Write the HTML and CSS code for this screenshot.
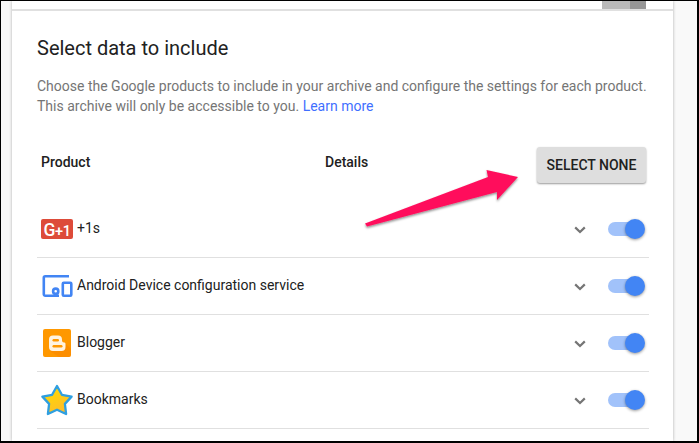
FILE: index.html
```html
<!DOCTYPE html>
<html lang="en">
<head>
<meta charset="utf-8">
<title>Select data to include</title>
<link rel="stylesheet" href="styles.css">
</head>
<body>
<div class="frame">
  <main class="card">
    <div class="topbar"><div class="block"><span class="block-light"></span><span class="block-dark"></span></div></div>
    <section class="content">
      <h1 class="title">Select data to include</h1>
      <p class="desc">Choose the Google products to include in your archive and configure the settings for each product.<br>This archive will only be accessible to you. <a class="link" href="#">Learn more</a></p>
      <div class="head">
        <span class="head-product">Product</span>
        <span class="head-details">Details</span>
        <button class="select-none">SELECT NONE</button>
      </div>
      <div class="row">
        <svg class="icon" viewBox="0 0 32 32"><rect x="0" y="6" width="32" height="20" rx="2" fill="#dd4b39"/><text x="2.500" y="22.500" class="gplus"><tspan class="gplus-g">G</tspan>+1</text></svg>
        <span class="name">+1s</span>
        <svg class="chev" viewBox="0 0 12 8"><path d="M1.2 1.4 6 6l4.8-4.6" fill="none" stroke="#757575" stroke-width="2.200"/></svg>
        <span class="toggle"><span class="track"></span><span class="thumb"></span></span>
      </div>
      <div class="row">
        <svg class="icon" viewBox="0 0 32 32"><g fill="none" stroke="#4285f4" stroke-width="2.600"><path d="M28 6.300H4.300A1.500 1.500 0 0 0 2.800 7.800V24.200A1.500 1.500 0 0 0 4.300 25.700H18"/><rect x="21.800" y="12.800" width="8.500" height="12.900" rx="1"/><circle cx="14.700" cy="21.200" r="2.600"/></g></svg>
        <span class="name">Android Device configuration service</span>
        <svg class="chev" viewBox="0 0 12 8"><path d="M1.2 1.4 6 6l4.800-4.600" fill="none" stroke="#757575" stroke-width="2.200"/></svg>
        <span class="toggle"><span class="track"></span><span class="thumb"></span></span>
      </div>
      <div class="row">
        <svg class="icon" viewBox="0 0 32 32"><rect x="2" y="2" width="28" height="28" rx="2" fill="#ff9800"/><path d="M24 16 30 22v6a2 2 0 0 1-2 2H18l-9-6Z" fill="#f57c00" opacity=".35"/><path d="M12 8.500h5a4 4 0 0 1 4 4v1a2 2 0 0 0 2 2h.5a1.500 1.500 0 0 1 1 1.500v3a4 4 0 0 1-4 4H12a4 4 0 0 1-4-4v-7.500a4 4 0 0 1 4-4Z" fill="#fff3e0"/><rect x="11.500" y="12" width="6.500" height="2.400" rx="1.200" fill="#ff9800"/><rect x="11.500" y="18" width="10" height="2.400" rx="1.200" fill="#ff9800"/></svg>
        <span class="name">Blogger</span>
        <svg class="chev" viewBox="0 0 12 8"><path d="M1.2 1.4 6 6l4.800-4.600" fill="none" stroke="#757575" stroke-width="2.200"/></svg>
        <span class="toggle"><span class="track"></span><span class="thumb"></span></span>
      </div>
      <div class="row">
        <svg class="icon" viewBox="0 0 32 32"><defs><linearGradient id="star" x1="0.2" y1="0" x2="0.8" y2="1"><stop offset="0" stop-color="#ffdc00"/><stop offset="1" stop-color="#ffb92e"/></linearGradient></defs><path d="M16 2 20.900 10.800 30.600 12.600 23.900 19.900 25.100 30 16 25.700 6.900 30 8.100 19.900 1.400 12.600 11.100 10.800Z" fill="url(#star)" stroke="#2f9fe0" stroke-width="2.300" stroke-linejoin="round"/></svg>
        <span class="name">Bookmarks</span>
        <svg class="chev" viewBox="0 0 12 8"><path d="M1.2 1.4 6 6l4.800-4.600" fill="none" stroke="#757575" stroke-width="2.200"/></svg>
        <span class="toggle"><span class="track"></span><span class="thumb"></span></span>
      </div>
    </section>
  </main>
  <svg class="arrow" viewBox="0 0 170 75"><defs><filter id="sh" x="-10%" y="-20%" width="120%" height="150%"><feDropShadow dx="0" dy="1.500" stdDeviation="1.200" flood-color="#000" flood-opacity="0.45"/></filter></defs><path d="M5 63.500 128 17 126.500 10 158 17 137 40 137 32 7 66.500Z" fill="#ff0f5b" filter="url(#sh)"/></svg>
</div>
</body>
</html>
```
FILE: styles.css
```css
* { box-sizing: border-box; }
html, body { margin: 0; padding: 0; }
body { width: 699px; height: 443px; overflow: hidden; font-family: Roboto, "Liberation Sans", sans-serif; }
.frame {
  position: relative;
  width: 699px;
  height: 443px;
  background: #f9f9f9;
  border-style: solid;
  border-color: #000;
  border-width: 1px 2px 2px 1px;
  padding: 0 24px 0 11px;
  overflow: hidden;
}
.card {
  height: 100%;
  background: #fff;
  box-shadow: 0 0 3px rgba(0,0,0,.3);
  overflow: hidden;
}
.topbar {
  height: 10px;
  border-bottom: 2px solid #e0e0e0;
  display: flex;
  justify-content: flex-end;
  padding-right: 27px;
}
.block { display: flex; height: 8px; }
.block-light { width: 28px; background: #b9b9b9; }
.block-dark { width: 16px; background: #969696; }
.content { padding: 0 24px 0 25px; }
.title {
  margin: 25px 0 0;
  font-size: 20px;
  line-height: 24px;
  font-weight: 400;
  color: #212121;
}
.desc {
  margin: 16px 0 0;
  font-size: 14px;
  line-height: 20px;
  color: #757575;
  white-space: nowrap;
}
.link { color: #3f6fff; text-decoration: none; }
.head {
  display: flex;
  align-items: center;
  height: 36px;
  margin-top: 31px;
  padding-left: 4px;
  font-size: 14px;
  font-weight: 500;
  color: #212121;
}
.head-product { width: 284px; margin-top: -6px; }
.head-details { flex: 1; margin-top: -6px; }
.select-none {
  width: 109px;
  height: 36px;
  margin-right: 3px;
  border: 0;
  border-radius: 3px;
  background: #dedede;
  box-shadow: 0 1px 2px rgba(0,0,0,.4);
  font: 500 14px Roboto, sans-serif;
  color: #212121;
}
.row {
  display: flex;
  align-items: center;
  height: 57px;
  padding: 0 4px;
  border-bottom: 1px solid #e0e0e0;
  font-size: 14px;
  color: #212121;
}
.head + .row { margin-top: 18px; }
.icon { width: 32px; height: 32px; flex: none; }
.gplus { font: 500 14.500px Roboto, sans-serif; letter-spacing: -.4px; fill: #fff; }
.gplus-g { font-size: 17.500px; }
.name { flex: 1; margin-left: 4px; margin-top: -2px; }
.chev { width: 12px; height: 8px; margin: 1px 22px 0 0; flex: none; }
.toggle { position: relative; width: 37px; height: 20px; flex: none; }
.track { position: absolute; left: 0; top: 3px; width: 35px; height: 14px; border-radius: 7px; background: #a1c2fa; }
.thumb { position: absolute; right: 0; top: 0; width: 20px; height: 20px; border-radius: 50%; background: #4285f4; box-shadow: 0 1px 3px rgba(0,0,0,.4); }
.arrow { position: absolute; left: 359px; top: 159px; width: 170px; height: 75px; }
```
